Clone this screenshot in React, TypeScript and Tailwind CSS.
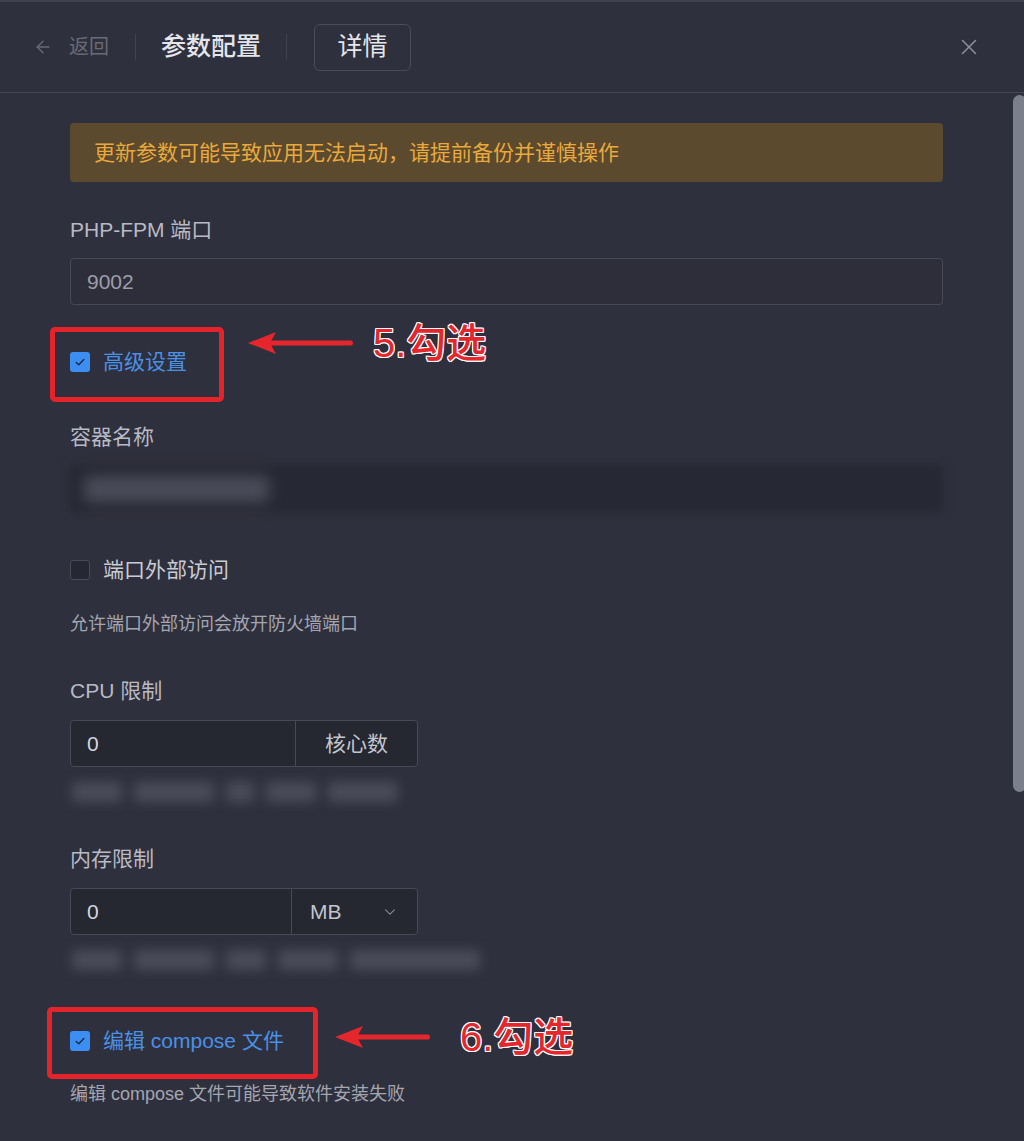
import React from 'react'
import { ArrowLeft, X, ChevronDown } from 'lucide-react'

const font = "font-['Liberation_Sans','Noto_Sans_CJK_SC',sans-serif]"

function CheckMark() {
    return (
        <span className="flex items-center justify-center w-[20px] h-[20px] rounded-[3px] bg-[#3d8ef2]">
            <svg width="12" height="12" viewBox="0 0 12 12" fill="none">
                <polyline points="2.2,6.4 4.8,8.8 9.8,3.4" stroke="#1d2a44" strokeWidth="1.4" strokeLinecap="round" strokeLinejoin="round" />
            </svg>
        </span>
    )
}

function RedArrow({ width }: { width: number }) {
    return (
        <svg width={width} height="26" viewBox={`0 0 ${width} 26`}>
            <polygon points={`0,13 28,2 22,13 28,24`} fill="#e5262d" />
            <rect x="18" y="10.5" width={width - 20} height="5" rx="2.5" fill="#e5262d" />
        </svg>
    )
}

function StepLabel({ text }: { text: string }) {
    return (
        <span className="text-[40px] leading-none font-medium text-[#e5262d] whitespace-nowrap [text-shadow:1px_1px_0_#fff,-1px_-1px_0_#fff,1px_-1px_0_#fff,-1px_1px_0_#fff,0_1px_0_#fff,0_-1px_0_#fff,1px_0_0_#fff,-1px_0_0_#fff]">
            {text}
        </span>
    )
}

function BlurLine({ widths }: { widths: number[] }) {
    return (
        <div className="flex items-center gap-[12px] h-[24px] pl-[2px] blur-[6px]">
            {widths.map((w, i) => (
                <div key={i} className="h-[20px] rounded bg-[#4a4c59]" style={{ width: w }}></div>
            ))}
        </div>
    )
}

function Label({ children, className = '' }: { children: React.ReactNode, className?: string }) {
    return <div className={`h-[26px] leading-[26px] text-[21px] text-[#b8bac4] ${className}`}>{children}</div>
}

function App() {
    return (
        <div className={`relative w-[1024px] h-[1141px] overflow-hidden bg-[#2f303d] border-t-2 border-[#3f4150] ${font}`}>

            {/* header */}
            <div className="flex items-center h-[91px] pl-[33px] pr-[42px] border-b border-[#464857]">
                <ArrowLeft size={20} strokeWidth={1.6} className="text-[#686a76]" />
                <span className="ml-[16px] text-[20px] text-[#686a76]">返回</span>
                <span className="ml-[26px] w-px h-[26px] bg-[#414352]"></span>
                <span className="ml-[25px] text-[25px] font-medium text-[#e4e6eb]">参数配置</span>
                <span className="ml-[25px] w-px h-[26px] bg-[#414352]"></span>
                <span className="ml-[27px] flex items-center justify-center w-[97px] h-[47px] border border-[#4a4c5a] rounded-md text-[25px] text-[#e4e6eb]">详情</span>
                <X size={26} strokeWidth={1.4} className="ml-auto text-[#8b8d98]" />
            </div>

            {/* body */}
            <div className="relative pt-[30px] pl-[70px] pr-[81px]">
                <div className="h-[59px] flex items-center pl-[24px] rounded bg-[#5b4a2d] text-[21px] text-[#eaa93c]">
                    更新参数可能导致应用无法启动，请提前备份并谨慎操作
                </div>

                <Label className="mt-[35px]">PHP-FPM 端口</Label>
                <div className="mt-[15px] h-[47px] flex items-center px-[16px] border border-[#474958] rounded bg-[#2d2e3a] text-[21px] text-[#9c9ea8]">9002</div>

                <div className="relative mt-[44px] h-[26px] flex items-center gap-[13px]">
                    <CheckMark />
                    <span className="text-[21px] text-[#4a90e6]">高级设置</span>
                    <div className="absolute left-[-20px] top-[-22px] w-[174px] h-[75px] border-[5px] border-[#e5232a] rounded-[5px]"></div>
                    <div className="absolute left-[178px] top-[-26px] flex items-center gap-[18px]">
                        <RedArrow width={107} />
                        <StepLabel text="5.勾选" />
                    </div>
                </div>

                <Label className="mt-[49px]">容器名称</Label>
                <div className="mt-[15px] h-[47px] flex items-center px-[14px] rounded bg-[#262833] blur-[4px]">
                    <div className="w-[185px] h-[26px] rounded bg-[#4a4c59] blur-[6px]"></div>
                </div>

                <div className="mt-[45px] h-[26px] flex items-center gap-[13px]">
                    <span className="w-[20px] h-[20px] rounded-[3px] border border-[#494b59] bg-[#252733]"></span>
                    <span className="text-[21px] text-[#c9cbd3]">端口外部访问</span>
                </div>
                <div className="mt-[29px] h-[24px] leading-[24px] text-[18px] text-[#a4a6b0]">允许端口外部访问会放开防火墙端口</div>

                <Label className="mt-[42px]">CPU 限制</Label>
                <div className="mt-[16px] w-[348px] h-[47px] flex border border-[#474958] rounded bg-[#252731]">
                    <div className="w-[225px] flex items-center px-[16px] border-r border-[#474958] text-[21px] text-[#d4d6dc]">0</div>
                    <div className="flex-1 flex items-center justify-center text-[21px] text-[#c3c5cd]">核心数</div>
                </div>
                <div className="mt-[13px]">
                    <BlurLine widths={[50, 80, 28, 50, 70]} />
                </div>

                <Label className="mt-[42px]">内存限制</Label>
                <div className="mt-[16px] w-[348px] h-[47px] flex border border-[#474958] rounded bg-[#252731]">
                    <div className="w-[221px] flex items-center px-[16px] border-r border-[#474958] text-[21px] text-[#d4d6dc]">0</div>
                    <div className="flex-1 flex items-center pl-[18px] pr-[18px] text-[21px] text-[#c3c5cd]">
                        MB
                        <ChevronDown size={18} strokeWidth={1.4} className="ml-auto text-[#9a9ca6]" />
                    </div>
                </div>
                <div className="mt-[13px]">
                    <BlurLine widths={[50, 80, 40, 60, 130]} />
                </div>

                <div className="relative mt-[56px] h-[26px] flex items-center gap-[13px]">
                    <CheckMark />
                    <span className="text-[21px] text-[#4a90e6]">编辑 compose 文件</span>
                    <div className="absolute left-[-23px] top-[-21px] w-[271px] h-[72px] border-[5px] border-[#e5232a] rounded-[5px]"></div>
                    <div className="absolute left-[265px] top-[-11px] flex items-center gap-[28px]">
                        <RedArrow width={97} />
                        <StepLabel text="6.勾选" />
                    </div>
                </div>
                <div className="mt-[28px] h-[24px] leading-[24px] text-[18px] text-[#a4a6b0]">编辑 compose 文件可能导致软件安装失败</div>

                {/* scrollbar */}
                <div className="absolute right-[-2px] top-[2px] w-[13px] h-[697px] rounded-full bg-[#7b7e8b]"></div>
            </div>
        </div>
    )
}

export default App
